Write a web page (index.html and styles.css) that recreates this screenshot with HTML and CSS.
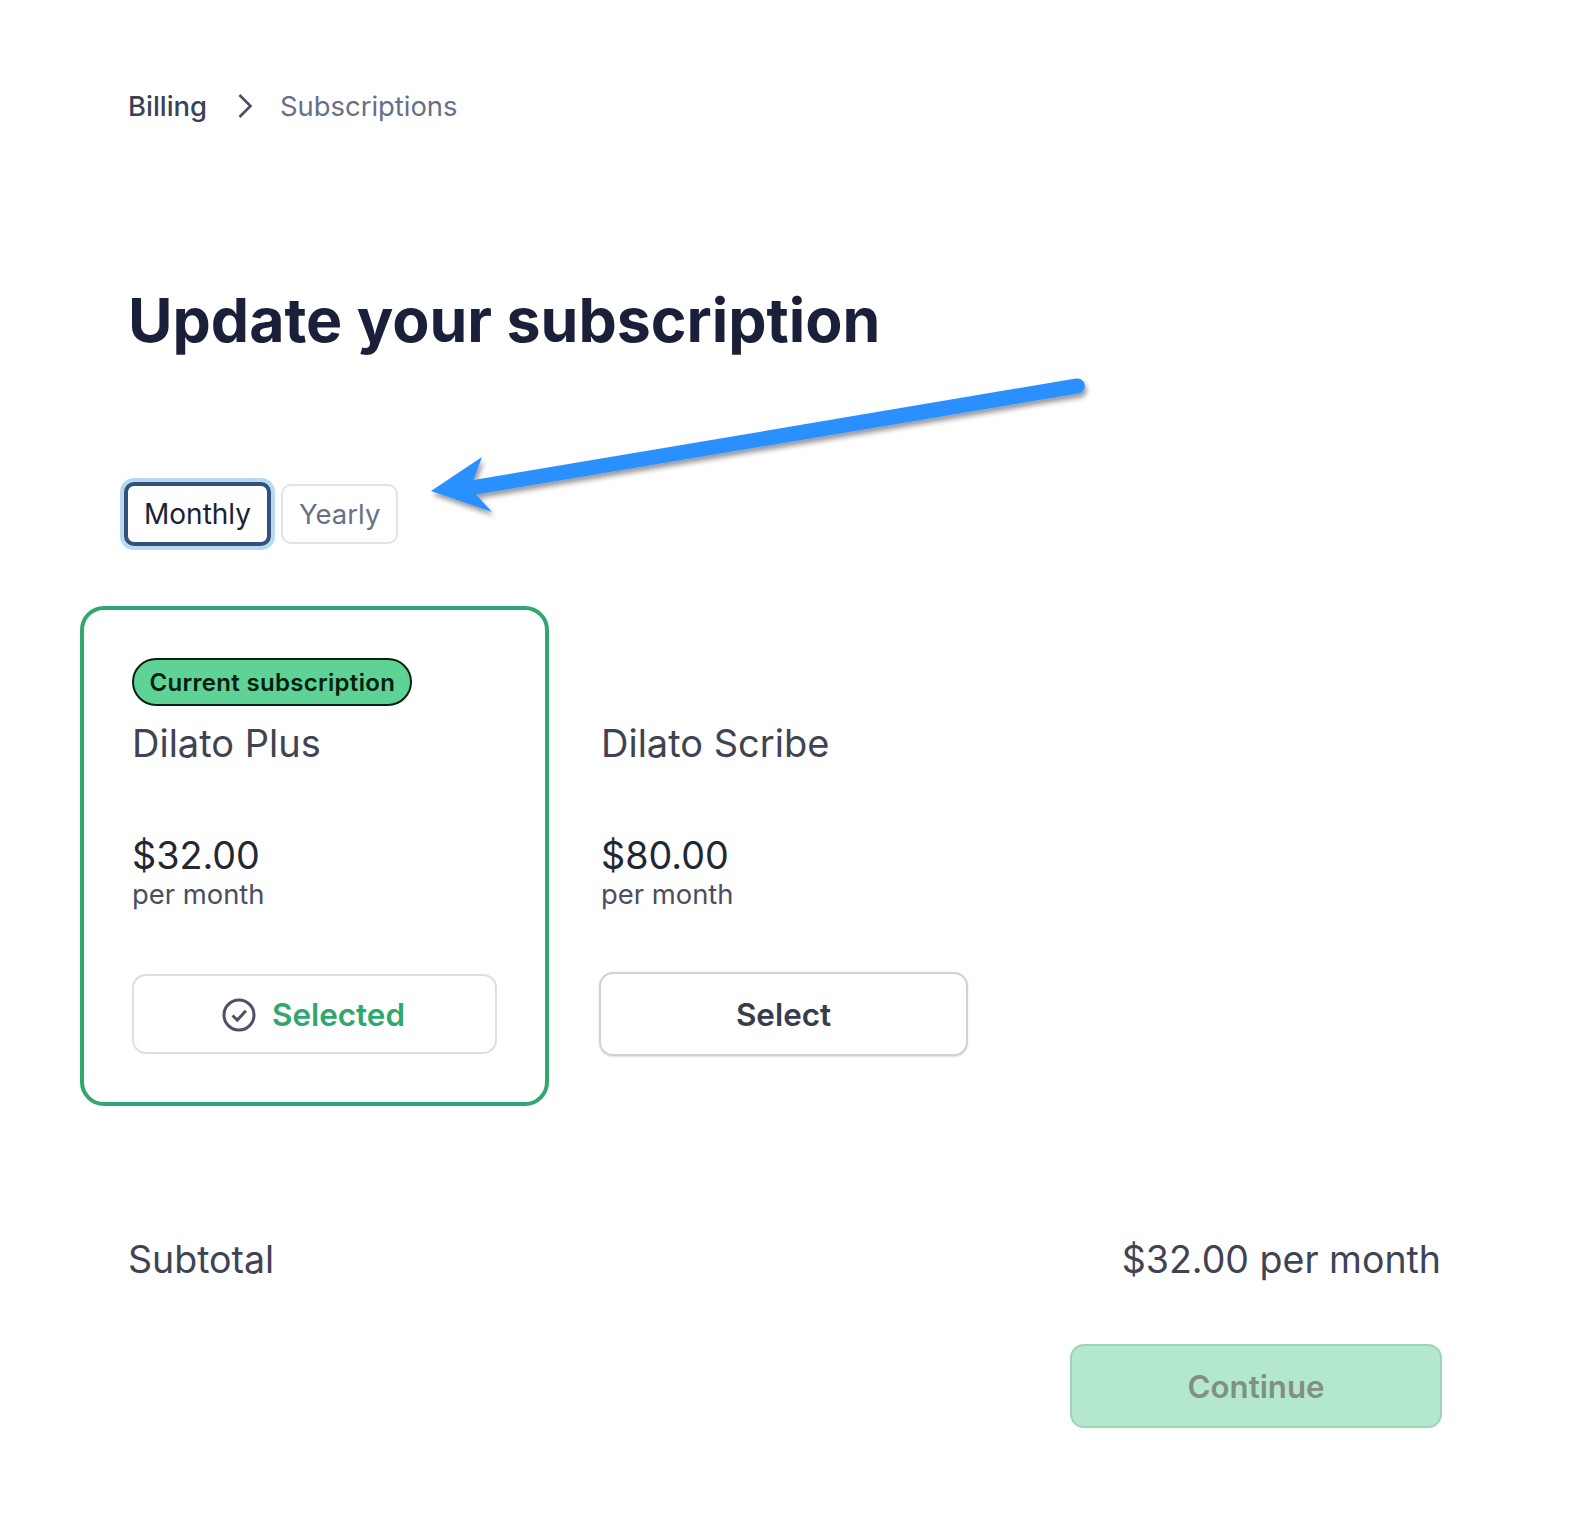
FILE: index.html
```html
<!DOCTYPE html>
<html lang="en">
<head>
  <meta charset="UTF-8" />
  <title>Update your subscription</title>
  <link rel="stylesheet" href="styles.css">
</head>
<body>
  <div class="page">
    <nav class="breadcrumb">
      <a href="#">Billing</a>
      <svg class="chevron" viewBox="0 0 16 28" fill="none" stroke="currentColor" stroke-width="2.6"><path d="M2.5 3l11 11-11 11"/></svg>
      <span>Subscriptions</span>
    </nav>

    <h1>Update your subscription</h1>

    <div class="tabs">
      <button class="tab active">Monthly</button>
      <button class="tab">Yearly</button>
    </div>

    <div class="plans">
      <div class="plan current">
        <span class="badge">Current subscription</span>
        <div class="plan-name">Dilato Plus</div>
        <div class="plan-price">$32.00</div>
        <div class="plan-period">per month</div>
        <button class="plan-btn selected">
          <svg viewBox="0 0 34 34" fill="none" stroke="#4d5166" stroke-width="3"><circle cx="17" cy="17" r="15"/><path d="M10.5 17.500l4.800 4.600 8.600-9.400"/></svg>
          <span>Selected</span>
        </button>
      </div>
      <div class="plan">
        <div class="plan-name">Dilato Scribe</div>
        <div class="plan-price">$80.00</div>
        <div class="plan-period">per month</div>
        <button class="plan-btn">Select</button>
      </div>
    </div>

    <div class="subtotal">
      <span>Subtotal</span>
      <span>$32.00 per month</span>
    </div>

    <div class="actions">
      <button class="continue" disabled>Continue</button>
    </div>
  </div>

  <!-- annotation arrow over the page -->
  <svg class="arrow" viewBox="0 0 1576 1524">
    <defs>
      <filter id="arrowShadow" x="-5%" y="-20%" width="110%" height="150%">
        <feDropShadow dx="2" dy="4" stdDeviation="2.5" flood-color="#000" flood-opacity="0.4"/>
      </filter>
    </defs>
    <path filter="url(#arrowShadow)" fill="#2a90ff" d="M431 491L482 457L473.500 480L1076 378.500A7.500 7.500 0 0 1 1078.500 393.500L476 494.500L492 512Z"/>
  </svg>
</body>
</html>
```

FILE: styles.css
```css
* {
  box-sizing: border-box;
}

body {
  margin: 0;
  background: #fff;
  font-family: Inter, "Noto Sans", sans-serif;
  color: #3f4354;
}

.page {
  padding: 89px 134px 0 128px;
}

.breadcrumb {
  display: flex;
  align-items: center;
  height: 34px;
  font-size: 27.4px;
  color: #667087;
}

.breadcrumb a {
  color: #3a4258;
  font-weight: 500;
  text-decoration: none;
}

.chevron {
  width: 16px;
  height: 28px;
  margin: 0 27px 0 30px;
  color: #4a5166;
}

h1 {
  margin: 161px 0 0;
  font-size: 60.8px;
  line-height: 72px;
  font-weight: 700;
  color: #1a1f3a;
}

.tabs {
  display: flex;
  align-items: center;
  gap: 10px;
  margin: 126px 0 0 -4px;
}

.tab {
  height: 60px;
  padding: 0 16px;
  font-family: inherit;
  font-size: 27.5px;
  color: #667087;
  background: #fff;
  border: 2px solid #e2e3ea;
  border-radius: 10px;
}

.tab.active {
  height: 64px;
  padding: 0 16px;
  font-size: 28px;
  color: #1a1f3a;
  border: 4px solid #30527c;
  box-shadow: 0 0 0 4px #b9d8f2;
}

.plans {
  display: flex;
  margin: 60px 0 0 -48px;
}

.plan {
  width: 469px;
  height: 500px;
  padding: 0 49px;
  display: flex;
  flex-direction: column;
}

.plan.current {
  padding: 48px 48px 0;
  border: 4px solid #2fa76e;
  border-radius: 24px;
}

.badge {
  align-self: flex-start;
  height: 48px;
  padding: 0 15px 0 15.5px;
  display: flex;
  align-items: center;
  font-size: 24px;
  font-weight: 600;
  letter-spacing: 0.3px;
  color: #04200f;
  background: #5fd396;
  border: 2px solid #04200f;
  border-radius: 24px;
}

.plan-name {
  margin-top: 11px;
  font-size: 38px;
  line-height: 52px;
  color: #3f4354;
}

.plan:not(.current) .plan-name {
  margin-top: 111px;
  margin-left: 3px;
}

.plan-price {
  margin-top: 63px;
  font-size: 37.7px;
  line-height: 46px;
  color: #232733;
}

.plan-period {
  margin-top: -1px;
  font-size: 27.4px;
  line-height: 34px;
  color: #4a4e60;
}

.plan:not(.current) .plan-price,
.plan:not(.current) .plan-period {
  margin-left: 3px;
}

.plan-btn {
  display: flex;
  align-items: center;
  justify-content: center;
  gap: 16px;
  width: 369px;
  height: 84px;
  margin: 61px 0 0 1px;
  padding: 2px 0 0;
  font-family: inherit;
  font-size: 31.4px;
  font-weight: 600;
  color: #363c4b;
  background: #fff;
  border: 2px solid #cdd2e0;
  border-radius: 14px;
  box-shadow: 0 1px 2px rgba(30, 40, 70, 0.15);
}

.plan-btn svg {
  width: 34px;
  height: 34px;
}

.plan-btn.selected {
  width: 365px;
  height: 80px;
  margin: 63px 0 0;
  padding: 2px 2px 0 0;
  color: #2fa76e;
  border-color: #dbdeea;
  box-shadow: none;
}

.subtotal {
  display: flex;
  justify-content: space-between;
  margin: 127px 1px 0 0;
  font-size: 37.5px;
  line-height: 54px;
  color: #3f4354;
}

.actions {
  display: flex;
  justify-content: flex-end;
  margin-top: 57px;
}

.continue {
  width: 372px;
  height: 84px;
  padding: 2px 0 0;
  font-family: inherit;
  font-size: 31.2px;
  font-weight: 600;
  color: #81907f;
  background: #b3e8cd;
  border: 2px solid #9ed3b8;
  border-radius: 14px;
}

.arrow {
  position: absolute;
  top: 0;
  left: 0;
  width: 1576px;
  height: 1524px;
  pointer-events: none;
}
```
